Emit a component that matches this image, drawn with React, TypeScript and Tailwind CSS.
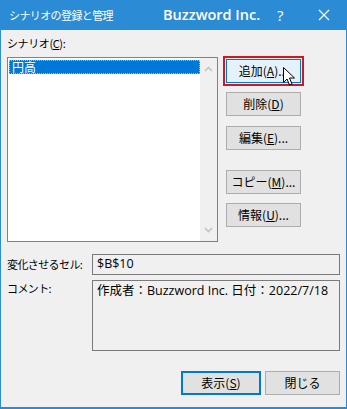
import React from "react";

const jp = { fontFamily: '"Noto Sans CJK JP", "Noto Sans", sans-serif' };
const lat = { fontFamily: '"Open Sans", "Noto Sans CJK JP", sans-serif' };

function Btn({ children, className = "" }: { children: React.ReactNode; className?: string }) {
  return (
    <div
      className={
        "w-[75px] h-[24px] flex items-center justify-center border border-[#adadad] bg-[#e1e1e1] text-[12px] text-black leading-none whitespace-nowrap " +
        className
      }
      style={jp}
    >
      {children}
    </div>
  );
}

export default function App() {
  return (
    <div className="w-[347px] h-[409px] flex flex-col bg-[#2b8bd5] overflow-hidden" style={jp}>
      {/* title bar */}
      <div className="h-[30px] shrink-0 flex items-center text-white whitespace-nowrap">
        <span className="ml-[9px] w-[110px] shrink-0 text-[11px] tracking-[-0.6px] leading-none">シナリオの登録と管理</span>
        <span className="ml-[44px] w-[100px] shrink-0 text-[14.5px] font-semibold leading-none" style={lat}>
          Buzzword Inc.
        </span>
        <span className="ml-[14px] text-[15px] leading-none" style={lat}>?</span>
        <svg className="ml-[35px] shrink-0" width="12" height="12" viewBox="0 0 12 12">
          <path d="M1 1 L11 11 M11 1 L1 11" stroke="white" strokeWidth="1.2" />
        </svg>
      </div>
      {/* body */}
      <div className="flex-1 mx-[1px] mb-[2px] bg-[#f0f0f0] flex flex-col pl-[6px] pr-[6px]">
        <div className="flex">
          <div className="flex flex-col">
            <div className="h-[27px] pt-[8px] text-[11px] tracking-[-0.4px] leading-none text-black whitespace-nowrap">
              シナリオ(<span className="underline">C</span>):
            </div>
            <div className="w-[211px] h-[185px] border border-[#828282] bg-white flex">
              <div className="flex-1 pt-[2px] pl-[1px]">
                <div className="h-[14px] bg-[#0078d7] border border-dotted border-[#9cc3ec] text-white text-[12px] leading-none flex items-center pl-[2px]">
                  円高
                </div>
              </div>
              <div className="w-[17px] bg-[#f0f0f0] flex flex-col items-center justify-between py-[8px]">
                <svg width="9" height="6" viewBox="0 0 9 6">
                  <path d="M1 5 L4.5 1.5 L8 5" stroke="#c4c4c4" strokeWidth="1.6" fill="none" />
                </svg>
                <svg width="9" height="6" viewBox="0 0 9 6">
                  <path d="M1 1 L4.5 4.5 L8 1" stroke="#c4c4c4" strokeWidth="1.6" fill="none" />
                </svg>
              </div>
            </div>
          </div>
          <div className="flex flex-col ml-[8px] pt-[26px] relative">
            <div className="w-[81px] h-[30px] border-2 border-[#d0191f] ml-[-3px] flex items-center justify-center">
              <Btn className="!border-[#0078d7] !bg-[#e5f1fb]">
                追加(<span className="underline">A</span>)...
              </Btn>
            </div>
            <Btn className="mt-[6px]">
              削除(<span className="underline">D</span>)
            </Btn>
            <Btn className="mt-[10px]">
              編集(<span className="underline">E</span>)...
            </Btn>
            <Btn className="mt-[20px]">
              コピー(<span className="underline">M</span>)...
            </Btn>
            <Btn className="mt-[9px]">
              情報(<span className="underline">U</span>)...
            </Btn>
            {/* cursor */}
            <svg className="absolute left-[57px] top-[37px]" width="13" height="20" viewBox="0 0 13 20">
              <path
                d="M0.5 0.5 L0.5 15.5 L4 12 L6.5 18 L9 17 L6.5 11 L11.5 11 Z"
                fill="white"
                stroke="black"
                strokeWidth="1"
              />
            </svg>
          </div>
        </div>
        {/* cells */}
        <div className="flex mt-[12px] items-center">
          <div className="w-[85px] shrink-0 text-[11px] tracking-[-0.6px] leading-none text-black whitespace-nowrap">変化させるセル:</div>
          <div className="w-[248px] h-[21px] border border-[#7a7a7a] bg-[#f0f0f0] flex items-center pl-[4px] text-[12.5px] text-black" style={lat}>
            $B$10
          </div>
        </div>
        <div className="flex mt-[5px]">
          <div className="w-[85px] shrink-0 pt-[3px] text-[11px] tracking-[-0.6px] leading-none text-black whitespace-nowrap">コメント:</div>
          <div className="w-[248px] h-[71px] border border-[#7a7a7a] bg-[#f0f0f0] pl-[4px] pt-[2px] text-[12.5px] text-black leading-[16px]" style={lat}>
            作成者：Buzzword Inc. 日付：2022/7/18
          </div>
        </div>
        <div className="flex justify-end mt-[20px] gap-[4px]">
          <div className="w-[80px] h-[24px] border-2 border-[#0078d7] bg-[#e1e1e1] flex items-center justify-center text-[12px] leading-none text-black">
            表示(<span className="underline">S</span>)
          </div>
          <div className="w-[75px] h-[24px] border border-[#adadad] bg-[#e1e1e1] flex items-center justify-center text-[12px] leading-none text-black">
            閉じる
          </div>
        </div>
      </div>
    </div>
  );
}
